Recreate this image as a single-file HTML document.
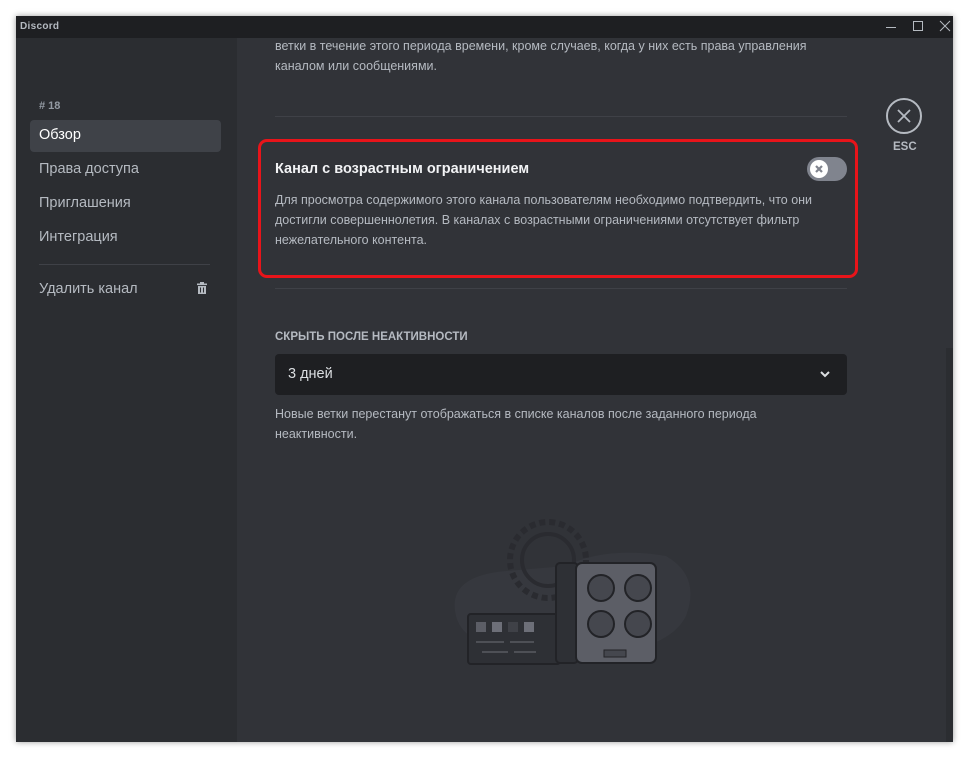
<!DOCTYPE html>
<html><head><meta charset="utf-8"><style>
*{margin:0;padding:0;box-sizing:border-box}
body{width:969px;height:758px;background:#fff;position:relative;overflow:hidden;font-family:"Liberation Sans","DejaVu Sans",sans-serif}
.win{position:absolute;left:16px;top:16px;width:937px;height:726px;background:#313338;overflow:hidden;box-shadow:0 0 6px rgba(0,0,0,.4)}
.tb{position:absolute;left:0;top:0;width:937px;height:22px;background:#1e1f22}
.tb .t{position:absolute;left:4px;top:5px;font-size:10px;font-weight:bold;color:#b5bac1;letter-spacing:.3px}
.side{position:absolute;left:0;top:22px;width:221px;height:704px;background:#2b2d31}
.a{position:absolute;color:#e0e1e5;font-size:14.5px}
.p{position:absolute;color:#b5bac1;font-size:12.5px;line-height:20px;transform-origin:0 0}
.div{position:absolute;height:1px;background:#3f4147}
</style></head><body>
<div class="win">
<div class="tb"><div class="t">Discord</div>
<div style="position:absolute;left:870px;top:11px;width:10px;height:1px;background:#b5bac1"></div>
<div style="position:absolute;left:897px;top:5px;width:10px;height:10px;border:1px solid #b5bac1"></div>
<svg style="position:absolute;left:923px;top:4px" width="12" height="12"><path d="M1 1L11 11M11 1L1 11" stroke="#b5bac1" stroke-width="1"/></svg>
</div>
<div class="side">
<div style="position:absolute;left:23px;top:62px;font-size:11px;color:#949ba4;font-weight:bold">#&nbsp;18</div>
<div style="position:absolute;left:14px;top:82px;width:191px;height:32px;background:#3f4248;border-radius:4px"></div>
<div class="a" style="left:23px;top:89px;color:#fff">Обзор</div>
<div class="a" style="left:23px;top:123px;color:#b5bac1">Права доступа</div>
<div class="a" style="left:23px;top:157px;color:#b5bac1">Приглашения</div>
<div class="a" style="left:23px;top:191px;color:#b5bac1">Интеграция</div>
<div class="div" style="left:23px;top:226px;width:171px"></div>
<div class="a" style="left:23px;top:243px;color:#b5bac1">Удалить канал</div>
<svg style="position:absolute;left:180px;top:244px" width="12" height="13" viewBox="0 0 12 13"><rect x="1" y="1.5" width="10" height="1.6" fill="#b5bac1"/><rect x="4" y="0" width="4" height="2" fill="#b5bac1"/><path d="M2 4h8v8H2z" fill="#b5bac1"/><path d="M4.5 5.5v5M7.5 5.5v5" stroke="#2b2d31" stroke-width="1"/></svg>
</div>
<div class="p" style="left:259px;top:20px;width:565px">ветки в течение этого периода времени, кроме случаев, когда у них есть права управления каналом или сообщениями.</div>
<div class="div" style="left:259px;top:100px;width:572px"></div>
<div style="position:absolute;left:242px;top:123px;width:600px;height:139px;border:3px solid #e8141a;border-radius:9px"></div>
<div style="position:absolute;left:259px;top:145px;font-size:14.5px;color:#f2f3f5;font-weight:bold">Канал с возрастным ограничением</div>
<div style="position:absolute;left:791px;top:141px;width:40px;height:24px;border-radius:12px;background:#80848e"></div>
<div style="position:absolute;left:794px;top:144px;width:18px;height:18px;border-radius:50%;background:#fff"></div>
<svg style="position:absolute;left:798px;top:148px" width="10" height="10"><path d="M2 2L8 8M8 2L2 8" stroke="#80848e" stroke-width="2.2"/></svg>
<div class="p" style="left:259px;top:174px;width:580px">Для просмотра содержимого этого канала пользователям необходимо подтвердить, что они достигли совершеннолетия. В каналах с возрастными ограничениями отсутствует фильтр нежелательного контента.</div>
<div class="div" style="left:259px;top:272px;width:572px"></div>
<div style="position:absolute;left:259px;top:315px;font-size:11.5px;font-weight:bold;color:#b5bac1">СКРЫТЬ ПОСЛЕ НЕАКТИВНОСТИ</div>
<div style="position:absolute;left:259px;top:338px;width:572px;height:41px;background:#1e1f22;border-radius:4px"></div>
<div style="position:absolute;left:272px;top:350px;font-size:14.5px;color:#dbdee1">3 дней</div>
<svg style="position:absolute;left:803px;top:353px" width="12" height="10"><path d="M2 3L6 7L10 3" stroke="#dbdee1" stroke-width="2" fill="none"/></svg>
<div class="p" style="left:259px;top:388px;width:560px">Новые ветки перестанут отображаться в списке каналов после заданного периода неактивности.</div>
<div style="position:absolute;left:870px;top:82px;width:36px;height:36px;border:2px solid #b5bac1;border-radius:50%"></div>
<svg style="position:absolute;left:880px;top:92px" width="16" height="16"><path d="M2 2L14 14M14 2L2 14" stroke="#b5bac1" stroke-width="1.8"/></svg>
<div style="position:absolute;left:877px;top:125px;font-size:11.5px;font-weight:bold;color:#b5bac1">ESC</div>
<div style="position:absolute;left:930px;top:332px;width:7px;height:394px;background:#2b2d31"></div>
<svg style="position:absolute;left:410px;top:490px" width="270" height="160" viewBox="0 0 270 160">
<path d="M30 110 Q20 70 80 65 L140 60 Q180 40 240 50 Q275 70 260 110 Q240 150 140 150 Q40 150 30 110Z" fill="#36383e"/>
<circle cx="122" cy="54" r="38" fill="none" stroke="#2a2b30" stroke-width="6" stroke-dasharray="6 4"/>
<circle cx="122" cy="54" r="26" fill="none" stroke="#2a2b30" stroke-width="4"/>
<rect x="42" y="108" width="92" height="50" rx="3" fill="#2e3035" stroke="#222327" stroke-width="2"/>
<rect x="50" y="116" width="10" height="10" fill="#5c5e66"/><rect x="66" y="116" width="10" height="10" fill="#6d6f78"/><rect x="82" y="116" width="10" height="10" fill="#3f4147"/><rect x="98" y="116" width="10" height="10" fill="#6d6f78"/>
<path d="M50 136h28M84 136h24M56 146h26M88 146h22" stroke="#6d6f78" stroke-width="1"/>
<rect x="130" y="57" width="22" height="100" rx="4" fill="#2e3035" stroke="#222327" stroke-width="2"/>
<rect x="150" y="57" width="80" height="100" rx="6" fill="#5c5e66" stroke="#222327" stroke-width="2"/>
<circle cx="175" cy="82" r="13" fill="#45474e" stroke="#222327" stroke-width="2"/><circle cx="212" cy="82" r="13" fill="#45474e" stroke="#222327" stroke-width="2"/>
<circle cx="175" cy="118" r="13" fill="#45474e" stroke="#222327" stroke-width="2"/><circle cx="212" cy="118" r="13" fill="#45474e" stroke="#222327" stroke-width="2"/>
<rect x="178" y="144" width="22" height="7" fill="#45474e" stroke="#222327"/>
</svg>
</div>
</body></html>
